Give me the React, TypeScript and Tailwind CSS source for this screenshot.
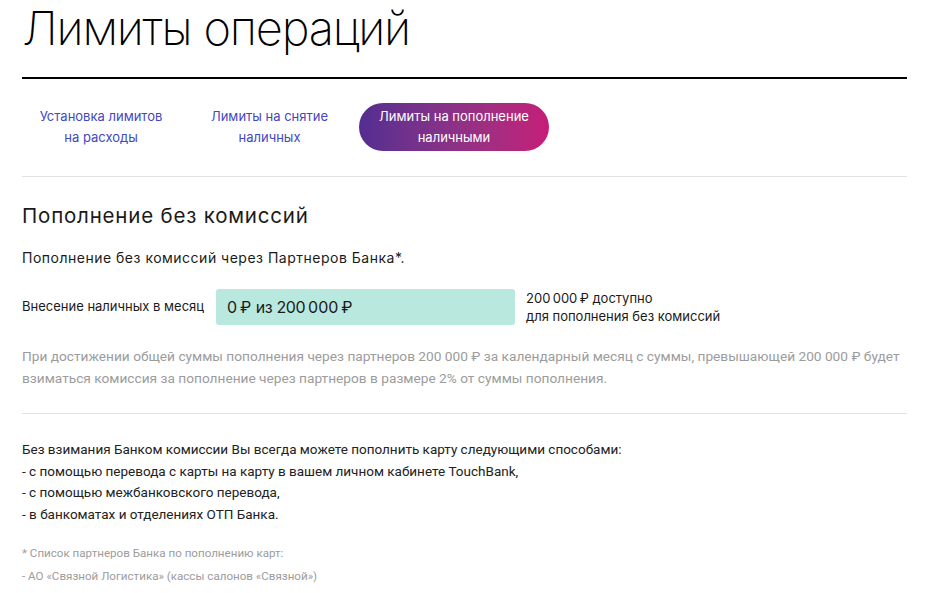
import React from 'react'

const tabs = [
  { top: 'Установка лимитов', bottom: 'на расходы' },
  { top: 'Лимиты на снятие', bottom: 'наличных' },
  { top: 'Лимиты на пополнение', bottom: 'наличными', active: true },
]

function App() {
  return (
    <div className="min-h-[593px] bg-white px-[22px] font-['Inter','Noto_Sans',sans-serif] text-[#1a1a1a]">
      <h1 className="text-[47px] leading-[56px] font-extralight tracking-[-1.2px] text-black">Лимиты операций</h1>
      <div className="mt-[21px] h-[2px] bg-black" />

      <div className="flex items-center pt-[24px] pb-[25px]">
        {tabs.map((t, i) => (
          <div
            key={i}
            className={`flex h-[48px] flex-col items-center justify-center whitespace-nowrap rounded-full text-[13px] leading-[21px] ${
              t.active
                ? 'w-[190px] bg-gradient-to-r from-[#542d91] to-[#c61c78] text-white'
                : i === 0
                ? 'w-[158px] text-[#4447c0]'
                : 'w-[179px] text-[#4447c0]'
            }`}
          >
            <span>{t.top}</span>
            <span>{t.bottom}</span>
          </div>
        ))}
      </div>

      <div className="h-px bg-[#e2e2e2]" />

      <h2 className="mt-[26px] text-[20.5px] leading-[26px] tracking-[0.8px] text-[#1a1a1a]">Пополнение без комиссий</h2>
      <p className="mt-[19px] text-[14px] leading-[20px] tracking-[0.5px]">Пополнение без комиссий через Партнеров Банка*.</p>

      <div className="mt-[21px] flex items-center">
        <div className="w-[194px] text-[13px]">Внесение наличных в месяц</div>
        <div className="flex h-[36px] w-[299px] items-center rounded-[3px] bg-[#b9e8de] px-[11px] text-[16px] tracking-[-0.4px]">
          0&#8239;₽ из 200&#8239;000&#8239;₽
        </div>
        <div className="ml-[11px] text-[13px] leading-[18px]">
          <div>200&#8239;000&#8239;₽ доступно</div>
          <div>для пополнения без комиссий</div>
        </div>
      </div>

      <p className="mt-[20px] font-['Roboto',sans-serif] text-[13.7px] leading-[22px] text-[#9c9c9c]">
        При достижении общей суммы пополнения через партнеров 200 000 ₽ за календарный месяц с суммы, превышающей 200 000 ₽ будет взиматься комиссия за пополнение через партнеров в размере 2% от суммы пополнения.
      </p>

      <div className="mt-[24px] h-px bg-[#e2e2e2]" />

      <div className="mt-[25px] font-['Roboto',sans-serif] text-[13.5px] leading-[21.5px] text-[#222]">
        <div>Без взимания Банком комиссии Вы всегда можете пополнить карту следующими способами:</div>
        <div>- с помощью перевода с карты на карту в вашем личном кабинете TouchBank,</div>
        <div>- с помощью межбанковского перевода,</div>
        <div>- в банкоматах и отделениях ОТП Банка.</div>
      </div>

      <div className="mt-[17px] font-['Roboto',sans-serif] text-[11.6px] leading-[23px] text-[#9c9c9c]">
        <div>* Список партнеров Банка по пополнению карт:</div>
        <div>- АО «Связной Логистика» (кассы салонов «Связной»)</div>
      </div>
    </div>
  )
}

export default App
